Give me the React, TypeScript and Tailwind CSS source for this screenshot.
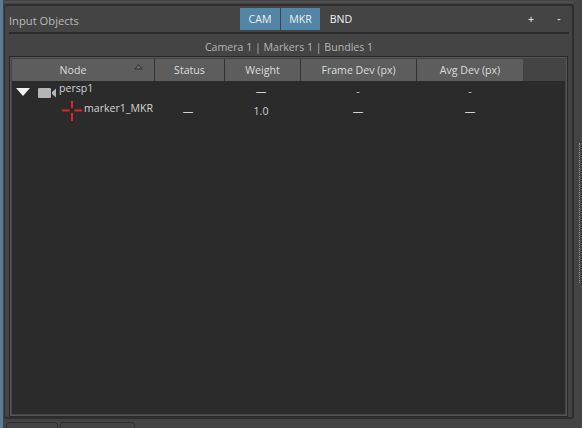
const font = { fontFamily: '"Open Sans", "Noto Sans", sans-serif' };

const cols = [
  { label: "Node", w: "w-[143px]" },
  { label: "Status", w: "w-[70px]" },
  { label: "Weight", w: "w-[76px]" },
  { label: "Frame Dev (px)", w: "w-[116px]" },
  { label: "Avg Dev (px)", w: "w-[106px]" },
];

function Camera() {
  return (
    <svg width="19" height="12" viewBox="0 0 19 12" className="shrink-0">
      <rect x="0" y="1" width="13" height="10" rx="1" fill="#b5b5b5" />
      <path d="M14 5 L18 1.5 V10.5 L14 7 Z" fill="#b5b5b5" />
    </svg>
  );
}

function Marker() {
  return (
    <svg width="21" height="21" viewBox="0 0 21 21" className="shrink-0">
      <path d="M0 9.5 H7.5 M12.5 9.5 H20 M10 0 V7 M10 12 V20" stroke="#e0242c" strokeWidth="2" fill="none" />
    </svg>
  );
}

function Cell({ w, children }: { w: string; children?: React.ReactNode }) {
  return <div className={`${w} shrink-0 text-center`}>{children}</div>;
}

export default function App() {
  return (
    <div className="flex h-[428px] w-[582px] overflow-hidden bg-[#444444] text-[10.6px] leading-none text-[#c4c4c4] antialiased" style={font}>
      <div className="w-[3px] shrink-0 bg-[#5c7c96]" />
      <div className="flex w-[571px] shrink-0 flex-col pt-[1px]">
        <div className="h-[2px] shrink-0 bg-[#4d4d4d]" />
        <div className="ml-[1px] mt-[1px] flex h-[418px] flex-col rounded-[3px] border-t-2 border-r-2 border-l border-b-2 border-[#2e2e2e] bg-[#444444] pl-[4px] pr-[3px]">
          <div className="flex h-[28px] shrink-0 items-center border-b-2 border-[#2b2b2b]">
            <div className="w-[231px] pt-[3px] text-[11.2px] text-[#b9b9b9]">Input Objects</div>
            <div className="flex h-[22px] items-center gap-[1px] text-[#eeeeee]">
              <div className="flex h-[22px] w-[40px] items-center justify-center bg-[#5285a6]">CAM</div>
              <div className="flex h-[22px] w-[39px] items-center justify-center bg-[#5285a6]">MKR</div>
              <div className="flex h-[22px] w-[40px] items-center justify-center text-[#f2f2f2]">BND</div>
            </div>
            <div className="ml-[163px] w-[14px] text-center font-semibold text-[#dddddd]">+</div>
            <div className="ml-[14px] w-[14px] text-center font-semibold text-[#dddddd]">-</div>
          </div>
          <div className="flex h-[22px] shrink-0 items-center justify-center pt-[4px] text-[#b4b4b4]">Camera 1 | Markers 1 | Bundles 1</div>
          <div className="mr-[1px] flex h-[361px] flex-col border border-[#292929] p-[2px] outline -outline-offset-2 outline-[#555555]">
            <div className="flex h-[22px] shrink-0 bg-[#444444] text-[#dcdcdc]">
              {cols.map((c) => (
                <div key={c.label} className={`${c.w} relative flex shrink-0 items-center justify-center border-r border-[#333333] bg-[#5d5d5d] last:border-r-0 ${c.label === "Node" ? "pr-[20px]" : ""}`}>
                  {c.label}
                  {c.label === "Node" && (
                    <svg width="9" height="6" viewBox="0 0 9 6" className="absolute right-[11px] top-[5px]">
                      <path d="M4.5 0.7 L8.2 5 H0.8 Z" fill="#707070" stroke="#2f2f2f" strokeWidth="1" />
                    </svg>
                  )}
                </div>
              ))}
            </div>
            <div className="flex-1 bg-[#2b2b2b] text-[#d2d2d2]">
              <div className="flex h-[20px] items-center pt-[1px]">
                <div className="flex w-[143px] shrink-0 items-start">
                  <svg width="14" height="8" viewBox="0 0 14 8" className="ml-[4px] mt-[3px] shrink-0">
                    <path d="M0 0 H14 L7 8 Z" fill="#f2f2f2" />
                  </svg>
                  <div className="ml-[8px] mt-[2px]"><Camera /></div>
                  <span className="ml-[2px] -mt-[2px]">persp1</span>
                </div>
                <Cell w="w-[70px]" />
                <Cell w="w-[72px] mr-[4px]">—</Cell>
                <Cell w="w-[114px] mr-[2px]">-</Cell>
                <Cell w="w-[106px]">-</Cell>
              </div>
              <div className="flex h-[20px] items-center pt-[1px]">
                <div className="flex w-[143px] shrink-0 items-center pl-[50px]">
                  <Marker />
                  <span className="ml-[1px] -mt-[6px]">marker1_MKR</span>
                </div>
                <Cell w="w-[66px] mr-[4px]">—</Cell>
                <Cell w="w-[72px] mr-[4px]">1.0</Cell>
                <Cell w="w-[114px] mr-[2px]">—</Cell>
                <Cell w="w-[106px]">—</Cell>
              </div>
            </div>
          </div>
        </div>
        <div className="ml-[3px] mt-[3px] flex gap-[2px]">
          <div className="h-[8px] w-[52px] rounded-t-[3px] border border-[#2e2e2e]" />
          <div className="h-[8px] w-[75px] rounded-t-[3px] border border-[#2e2e2e]" />
        </div>
      </div>
      <div className="flex flex-1 justify-end pr-[2px] pt-[143px]">
        <div className="h-[140px] border-r border-dotted border-[#9a9a9a]" />
      </div>
    </div>
  );
}
